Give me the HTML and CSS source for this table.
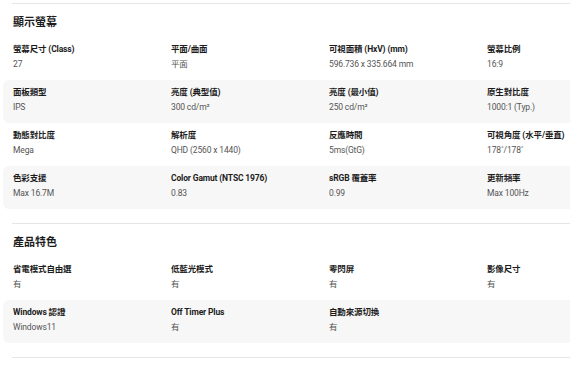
FILE: index.html
```html
<!DOCTYPE html>
<html lang="zh-Hant">
<head>
    <meta charset="UTF-8">
    <meta name="viewport" content="width=device-width, initial-scale=1.0">
    <title>規格</title>
    <link rel="stylesheet" href="styles.css">
</head>
<body>
    <div class="specs">
        <div class="section">
            <div class="divider"></div>
            <h2 class="section-title">顯示螢幕</h2>
            <div class="row">
                <div class="item"><div class="label">螢幕尺寸 (Class)</div><div class="value">27</div></div>
                <div class="item"><div class="label">平面/曲面</div><div class="value">平面</div></div>
                <div class="item"><div class="label">可視面積 (HxV) (mm)</div><div class="value">596.736 x 335.664 mm</div></div>
                <div class="item"><div class="label">螢幕比例</div><div class="value">16:9</div></div>
            </div>
            <div class="row shaded">
                <div class="item"><div class="label">面板類型</div><div class="value">IPS</div></div>
                <div class="item"><div class="label">亮度 (典型值)</div><div class="value">300 cd/m²</div></div>
                <div class="item"><div class="label">亮度 (最小值)</div><div class="value">250 cd/m²</div></div>
                <div class="item"><div class="label">原生對比度</div><div class="value">1000:1 (Typ.)</div></div>
            </div>
            <div class="row">
                <div class="item"><div class="label">動態對比度</div><div class="value">Mega</div></div>
                <div class="item"><div class="label">解析度</div><div class="value">QHD (2560 x 1440)</div></div>
                <div class="item"><div class="label">反應時間</div><div class="value">5ms(GtG)</div></div>
                <div class="item"><div class="label">可視角度 (水平/垂直)</div><div class="value">178˚/178˚</div></div>
            </div>
            <div class="row shaded">
                <div class="item"><div class="label">色彩支援</div><div class="value">Max 16.7M</div></div>
                <div class="item"><div class="label">Color Gamut (NTSC 1976)</div><div class="value">0.83</div></div>
                <div class="item"><div class="label">sRGB 覆蓋率</div><div class="value">0.99</div></div>
                <div class="item"><div class="label">更新頻率</div><div class="value">Max 100Hz</div></div>
            </div>
        </div>

        <div class="section">
            <div class="divider"></div>
            <h2 class="section-title">產品特色</h2>
            <div class="row">
                <div class="item"><div class="label">省電模式自由選</div><div class="value">有</div></div>
                <div class="item"><div class="label">低藍光模式</div><div class="value">有</div></div>
                <div class="item"><div class="label">零閃屏</div><div class="value">有</div></div>
                <div class="item"><div class="label">影像尺寸</div><div class="value">有</div></div>
            </div>
            <div class="row shaded">
                <div class="item"><div class="label">Windows 認證</div><div class="value">Windows11</div></div>
                <div class="item"><div class="label">Off Timer Plus</div><div class="value">有</div></div>
                <div class="item"><div class="label">自動來源切換</div><div class="value">有</div></div>
                <div class="item"></div>
            </div>
        </div>

        <div class="divider"></div>
    </div>
</body>
</html>
```

FILE: styles.css
```css
body {
    margin: 0;
    padding: 3px 0 0 3px;
    background: #ffffff;
    font-family: Roboto, 'Noto Sans CJK TC', sans-serif;
    color: #1c1c1c;
    overflow: hidden;
}

.specs {
    width: 567px;
    overflow: hidden;
}

.section {
    padding-bottom: 14px;
}

.divider {
    height: 1px;
    margin-left: 9px;
    background: #e6e6e6;
}

.section-title {
    margin: 12px 0 7px 10px;
    font-size: 11px;
    line-height: 14px;
    font-weight: 700;
    color: #1c1c1c;
}

.row {
    display: grid;
    grid-template-columns: repeat(4, 158px);
    height: 43px;
    box-sizing: border-box;
    padding: 6px 10px 0;
    border-radius: 6px 0 0 6px;
}

.shaded {
    background: #f7f7f7;
}

.label {
    font-size: 8.5px;
    line-height: 13px;
    font-weight: 700;
    letter-spacing: -0.15px;
    color: #1c1c1c;
    white-space: nowrap;
}

.value {
    margin-top: 2px;
    font-size: 8.5px;
    line-height: 13px;
    letter-spacing: -0.15px;
    color: #555555;
    white-space: nowrap;
}
```
